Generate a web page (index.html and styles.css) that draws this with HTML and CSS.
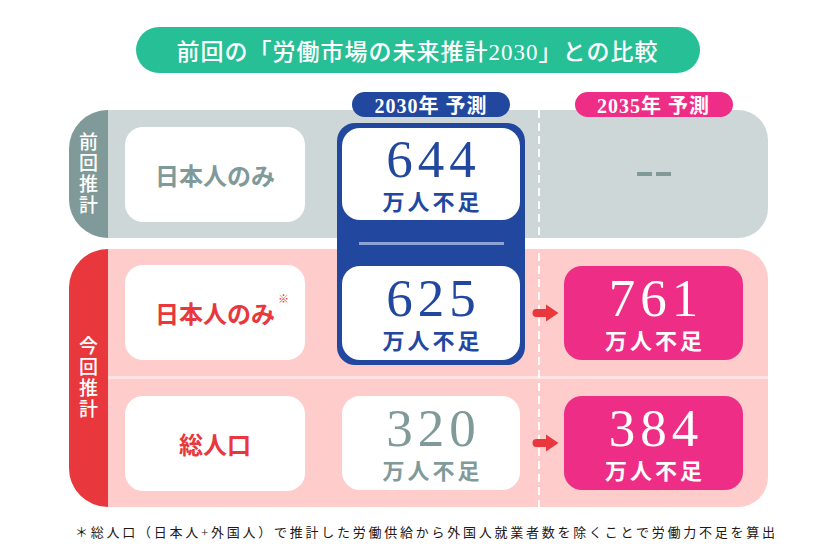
FILE: index.html
```html
<!DOCTYPE html>
<html lang="ja">
<head>
<meta charset="utf-8">
<title>労働市場の未来推計 比較</title>
<link rel="stylesheet" href="styles.css">
</head>
<body>
<div class="page">
  <h1 class="title">前回の「労働市場の未来推計2030」との比較</h1>
  <div class="chart">
    <div class="band band-prev"></div>
    <div class="band band-now"></div>
    <div class="sep"></div>
    <div class="dash-line"></div>
    <div class="tab tab-prev"><span>前回推計</span></div>
    <div class="tab tab-now"><span>今回推計</span></div>
    <div class="label label-2030">2030年 予測</div>
    <div class="label label-2035">2035年 予測</div>
    <div class="card cat cat-prev">日本人のみ</div>
    <div class="card cat cat-now"><span>日本人のみ</span><span class="mark">※</span></div>
    <div class="card cat cat-total">総人口</div>
    <div class="blue">
      <div class="card val val-blue val-top">
        <span class="num">644</span><span class="unit">万人不足</span>
      </div>
      <div class="blue-gap"><div class="blue-line"></div></div>
      <div class="card val val-blue val-bottom">
        <span class="num">625</span><span class="unit">万人不足</span>
      </div>
    </div>
    <div class="card val val-gray">
      <span class="num">320</span><span class="unit">万人不足</span>
    </div>
    <div class="nodata"><i></i><i></i></div>
    <div class="arrow arrow-now">
      <svg width="27" height="20" viewBox="0 0 27 20"><path d="M4.5 6 H14 V1.5 L26.5 10 L14 18.5 V14 H4.5 A4 4 0 0 1 4.5 6 Z" fill="#e8383d"/></svg>
    </div>
    <div class="arrow arrow-total">
      <svg width="27" height="20" viewBox="0 0 27 20"><path d="M4.5 6 H14 V1.5 L26.5 10 L14 18.5 V14 H4.5 A4 4 0 0 1 4.5 6 Z" fill="#e8383d"/></svg>
    </div>
    <div class="card val val-pink pink-now">
      <span class="num">761</span><span class="unit">万人不足</span>
    </div>
    <div class="card val val-pink pink-total">
      <span class="num">384</span><span class="unit">万人不足</span>
    </div>
  </div>
  <p class="footnote">＊総人口（日本人+外国人）で推計した労働供給から外国人就業者数を除くことで労働力不足を算出</p>
</div>
</body>
</html>
```
FILE: styles.css
```css
* { box-sizing: border-box; }

body {
  margin: 0;
  background: #ffffff;
  font-family: "Liberation Serif", "Noto Sans CJK JP", serif;
}

.page {
  width: 835px;
  height: 560px;
  padding-top: 27px;
  overflow: hidden;
}

.title {
  margin: 0 auto;
  width: 564px;
  height: 46px;
  border-radius: 23px;
  background: #27bf95;
  color: #ffffff;
  font-size: 23px;
  font-weight: 500;
  letter-spacing: 1px;
  display: flex;
  align-items: center;
  justify-content: center;
}

.chart {
  margin: 19px 0 0 69px;
  display: grid;
  grid-template-columns: 39px 229px 188px 14px 229px;
  grid-template-rows: 18px 128px 11px 127px 3px 128px;
}

.band {
  grid-column: 1 / -1;
  border-radius: 39px 30px 30px 39px;
}
.band-prev { grid-row: 2; background: #cdd7d8; }
.band-now { grid-row: 4 / 7; background: #ffcccc; }

.sep {
  grid-column: 2 / -1;
  grid-row: 5;
  background: #ffe3e3;
}

.dash-line {
  grid-column: 5;
  grid-row: 2 / -1;
  width: 2px;
  margin-left: -1px;
  background: repeating-linear-gradient(to bottom, #ffffff 0 8px, transparent 8px 13px);
}

.tab {
  grid-column: 1;
  display: flex;
  align-items: center;
  justify-content: center;
  border-radius: 39px 0 0 39px;
  color: #ffffff;
}
.tab span {
  width: 1em;
  font-size: 19px;
  line-height: 21px;
  font-weight: 500;
  text-align: center;
}
.tab-prev { grid-row: 2; background: #7f9a98; }
.tab-now { grid-row: 4 / 7; background: #e8383d; }

.label {
  grid-row: 1 / 3;
  align-self: start;
  justify-self: center;
  width: 158px;
  height: 25px;
  border-radius: 13px;
  color: #ffffff;
  font-size: 20px;
  font-weight: 700;
  letter-spacing: 1px;
  display: flex;
  align-items: center;
  justify-content: center;
}
.label-2030 { grid-column: 3; background: #21479f; }
.label-2035 { grid-column: 5; background: #ee2e86; }

.card {
  background: #ffffff;
  border-radius: 18px;
  display: flex;
  flex-direction: column;
  align-items: center;
  justify-content: center;
}

.cat {
  grid-column: 2;
  justify-self: start;
  align-self: center;
  margin-left: 17px;
  width: 180px;
  height: 95px;
  flex-direction: row;
  font-family: "Noto Sans CJK JP", sans-serif;
  font-size: 24px;
  font-weight: 700;
}
.cat-prev { grid-row: 2; color: #7f9a98; }
.cat-now { grid-row: 4; color: #e8383d; }
.cat-total { grid-row: 6; color: #e8383d; }

.mark {
  align-self: flex-start;
  margin-top: 28px;
  margin-left: 3px;
  margin-right: -14px;
  font-size: 11px;
  font-weight: 400;
  line-height: 11px;
}

.blue {
  grid-column: 3;
  grid-row: 2 / 5;
  margin: 13px 0 11px;
  padding: 5px;
  background: #21479f;
  border-radius: 18px;
  display: flex;
  flex-direction: column;
}
.val-top { height: 92px; }
.val-bottom { height: 94px; }
.blue-gap {
  height: 46px;
  display: flex;
  align-items: center;
  justify-content: center;
}
.blue-line {
  width: 145px;
  height: 3px;
  background: #8fa2d6;
}

.val { padding-bottom: 7px; }

.num {
  font-family: "Liberation Serif", serif;
  font-size: 53px;
  line-height: 59px;
  letter-spacing: 5px;
  margin-right: -5px;
}
.unit {
  font-family: "Noto Sans CJK JP", sans-serif;
  font-size: 22px;
  line-height: 22px;
  font-weight: 700;
  letter-spacing: 3px;
  margin-right: -3px;
}

.val-blue { color: #21479f; }

.val-gray {
  grid-column: 3;
  grid-row: 6;
  justify-self: center;
  align-self: center;
  width: 178px;
  height: 94px;
  color: #7f9a98;
}

.val-pink {
  grid-column: 5;
  justify-self: start;
  align-self: center;
  margin-left: 25px;
  width: 179px;
  height: 94px;
  background: #ee2e86;
  color: #ffffff;
}
.pink-now { grid-row: 4; }
.pink-total { grid-row: 6; }

.nodata {
  grid-column: 5;
  grid-row: 2;
  place-self: center;
  display: flex;
  gap: 4px;
}
.nodata i {
  display: block;
  width: 15px;
  height: 4px;
  background: #7f9a98;
}

.arrow {
  grid-column: 4 / 6;
  justify-self: start;
  align-self: center;
  margin-left: 7px;
  width: 27px;
  height: 20px;
}
.arrow svg { display: block; }
.arrow-now { grid-row: 4; }
.arrow-total { grid-row: 6; }

.footnote {
  margin: 16px 0 0 75px;
  font-family: "Liberation Serif", "Noto Sans CJK JP", serif;
  font-size: 13px;
  line-height: 20px;
  letter-spacing: 2.75px;
  color: #231815;
  white-space: nowrap;
}
```
